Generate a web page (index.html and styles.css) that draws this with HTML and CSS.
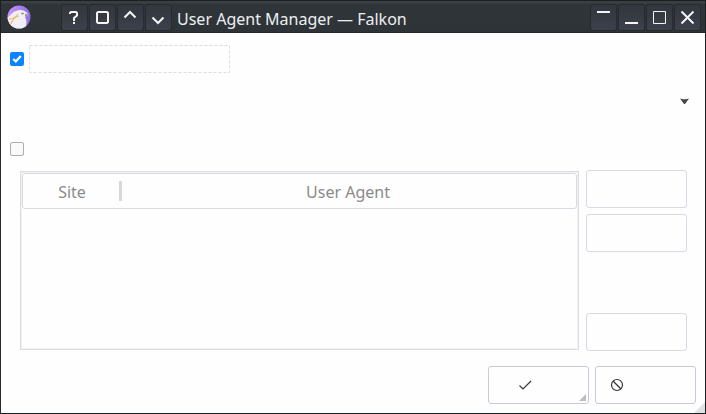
FILE: index.html
```html
<!DOCTYPE html>
<html lang="en">
<head>
<meta charset="utf-8">
<title>User Agent Manager — Falkon</title>
<link rel="stylesheet" href="styles.css">
</head>
<body>
<div class="window">
  <header class="titlebar">
    <svg class="logo" width="24" height="24" viewBox="0 0 24 24">
      <defs>
        <linearGradient id="sky" x1="0" y1="0" x2="1" y2="0"><stop offset="0" stop-color="#c795ff"/><stop offset="1" stop-color="#8e6fe0"/></linearGradient>
        <clipPath id="disc"><circle cx="12" cy="12" r="11.5"/></clipPath>
      </defs>
      <circle cx="12" cy="12" r="11.5" fill="url(#sky)"/>
      <g clip-path="url(#disc)">
        <path d="M0 13C3 11 5 7 9 6c4-2 9-1 12 3l-1 2.500-2 .5c2 3 2 7 0 12H3Z" fill="#f1eff2"/>
        <path d="M2 14c4 0 7-2 9-5M4 19c1-4 4-7 8-8" fill="none" stroke="#e9bd75" stroke-width="1.2"/>
        <path d="M14.500 8.500h2" fill="none" stroke="#77717c" stroke-width="1.300"/>
        <path d="m18 8.500 3 1-1 2.500-2-.5Z" fill="#9b929f"/>
      </g>
    </svg>
    <div class="controls">
      <span class="control"><svg width="25" height="25" viewBox="0 0 25 25"><path d="M8 9V8l1-1h5l1 1v2.500L12 13v3M12 17v2" stroke-width="2"/></svg></span>
      <span class="control"><svg width="25" height="25" viewBox="0 0 25 25"><path d="M8 7h9l1 1v9l-1 1H8l-1-1V8Z" stroke-width="2"/></svg></span>
      <span class="control"><svg width="25" height="25" viewBox="0 0 25 25"><path d="m6.500 12.500 5.500-5.500 5.500 5.500" stroke-width="2"/></svg></span>
      <span class="control"><svg width="25" height="25" viewBox="0 0 25 25"><path d="m6.500 12.500 5.500 5.500 5.500-5.500" stroke-width="2"/></svg></span>
    </div>
    <h1 class="title">User Agent Manager — Falkon</h1>
    <div class="controls">
      <span class="control"><svg width="25" height="25" viewBox="0 0 25 25"><path d="M6 7h13" stroke-width="2"/></svg></span>
      <span class="control"><svg width="25" height="25" viewBox="0 0 25 25"><path d="M6 18h13" stroke-width="2"/></svg></span>
      <span class="control"><svg width="25" height="25" viewBox="0 0 25 25"><path d="M6.500 6.500h12v12h-12Z"/></svg></span>
      <span class="control"><svg width="25" height="25" viewBox="0 0 25 25"><path d="m6.500 6.500 12 12m0-12-12 12" stroke-width="2"/></svg></span>
    </div>
  </header>
  <main class="content">
    <div class="option">
      <span class="check checked"><svg width="14" height="14" viewBox="0 0 14 14"><path d="m3.300 7 2.500 2.500 5-5.500" fill="none" stroke="#fff" stroke-width="2.200"/></svg></span>
      <svg class="focus" width="201" height="28" viewBox="0 0 201 28"><rect x=".5" y=".5" width="200" height="27" fill="none" stroke="#dcdcdc" stroke-dasharray="3 2"/></svg>
    </div>
    <div class="combo"><svg width="9" height="6" viewBox="0 0 9 6"><path d="M0 .5c2 1 7 1 9 0L5 6H4Z" fill="#454545"/></svg></div>
    <div class="option second"><span class="check"></span></div>
    <div class="sites">
      <div class="table">
        <div class="head"><span class="site">Site</span><span class="divider"></span><span class="agent">User Agent</span></div>
      </div>
      <div class="side">
        <span class="button"></span>
        <span class="button"></span>
        <span class="button last"></span>
      </div>
    </div>
    <footer class="actions">
      <span class="button ok"><svg width="101" height="38" viewBox="0 0 101 38"><path d="m31.500 19.500 3.500 3.500 8-8" fill="none" stroke="#35383b" stroke-width="1.200"/><path d="M98 28v7h-7Z" fill="#bdbdbd"/></svg></span>
      <span class="button cancel"><svg width="101" height="38" viewBox="0 0 101 38"><path d="m18 15 8 8" stroke="#35383b" stroke-width="1.200"/><circle cx="22" cy="19" r="5.500" fill="none" stroke="#35383b" stroke-width="1.200"/></svg></span>
    </footer>
  </main>
  <svg class="grip" width="11" height="11" viewBox="0 0 11 11"><path d="M11 0v11H0Z" fill="#e2e2e2"/></svg>
</div>
</body>
</html>
```
FILE: styles.css
```css
* { box-sizing: border-box; }
body { margin: 0; font: 16px/22px "Noto Sans", sans-serif; }
svg { display: block; }
.window {
  position: relative;
  width: 706px;
  height: 414px;
  background: #fefefe;
  border: 1px solid #1c1f22;
  border-top: 0;
  border-left-color: #282c31;
}
.titlebar {
  display: flex;
  height: 33px;
  padding: 5px 5px 0 6px;
  margin-left: -1px;
  background: linear-gradient(#1c1f22 0 1px, #3a3f44 1px 3px, #30353a 4px, #2e3338 32px, #23272b 32px);
  border-left: 1px solid #1c1f22;
}
.logo { flex: none; }
.controls { display: flex; gap: 3px; }
.logo + .controls { margin-left: 31px; }
.control {
  width: 25px;
  height: 25px;
  border-radius: 2px;
  background: linear-gradient(#32373d, #3b404a);
  box-shadow: 0 0 0 1px #272b2f;
}
.control path { fill: none; stroke: #f4f4f4; }
.title {
  flex: 1;
  margin: 3px 0 0 6px;
  font-size: 16px;
  font-weight: 400;
  line-height: 22px;
  color: #eceff1;
  white-space: nowrap;
}
.content { padding: 12px 9px 0; }
.option { display: flex; align-items: center; gap: 5px; height: 28px; }
.check {
  width: 14px;
  height: 14px;
  border: 1px solid #adadad;
  border-radius: 2px;
  background: #fafafa;
}
.checked { border: 0; background: #0a84ff; }
.combo { display: flex; justify-content: flex-end; height: 6px; margin: 25px 7px 0 0; }
.second { height: 14px; margin-top: 38px; }
.sites { display: flex; gap: 7px; margin: 14px 0 0 10px; }
.table {
  width: 559px;
  height: 179px;
  margin-top: 1px;
  padding: 1px;
  border: 1px solid #dddddf;
  box-shadow: inset 0 0 0 1px #f1f1f1;
}
.head {
  display: flex;
  align-items: center;
  height: 36px;
  border: 1px solid #d7dae7;
  border-radius: 3px;
  color: #8b8b8b;
  background: #fefefe;
}
.site { width: 96px; text-align: center; padding: 2px 0 0 2px; }
.divider { width: 3px; height: 20px; background: #d8d8d8; }
.agent { flex: 1; text-align: center; padding: 2px 2px 0 0; }
.side { display: flex; flex-direction: column; gap: 6px; height: 181px; }
.button {
  width: 101px;
  height: 38px;
  border: 1px solid #d9d9e7;
  border-radius: 3px;
}
.button.last { margin-top: auto; }
.actions { display: flex; justify-content: flex-end; gap: 6px; margin-top: 15px; }
.actions .button { border-color: #c8cadc; }
.actions svg { margin: -1px; }
.grip { position: absolute; right: 0; bottom: 0; }
```
